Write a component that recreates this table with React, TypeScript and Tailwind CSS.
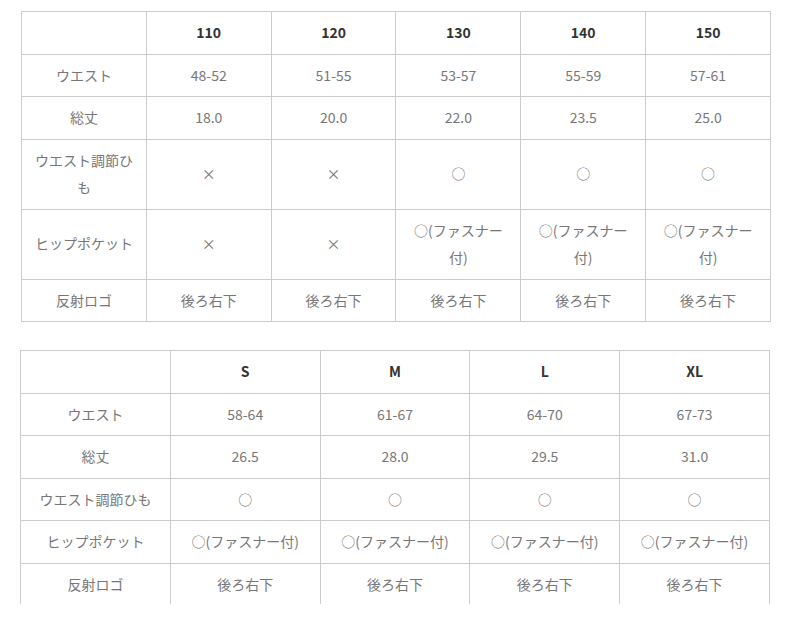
import React from 'react';

type Row = { label: string; values: string[] };

const KIDS_SIZES = ['110', '120', '130', '140', '150'];
const KIDS_ROWS: Row[] = [
  { label: 'ウエスト', values: ['48-52', '51-55', '53-57', '55-59', '57-61'] },
  { label: '総丈', values: ['18.0', '20.0', '22.0', '23.5', '25.0'] },
  { label: 'ウエスト調節ひも', values: ['×', '×', '○', '○', '○'] },
  { label: 'ヒップポケット', values: ['×', '×', '○(ファスナー付)', '○(ファスナー付)', '○(ファスナー付)'] },
  { label: '反射ロゴ', values: ['後ろ右下', '後ろ右下', '後ろ右下', '後ろ右下', '後ろ右下'] },
];

const ADULT_SIZES = ['S', 'M', 'L', 'XL'];
const ADULT_ROWS: Row[] = [
  { label: 'ウエスト', values: ['58-64', '61-67', '64-70', '67-73'] },
  { label: '総丈', values: ['26.5', '28.0', '29.5', '31.0'] },
  { label: 'ウエスト調節ひも', values: ['○', '○', '○', '○'] },
  { label: 'ヒップポケット', values: ['○(ファスナー付)', '○(ファスナー付)', '○(ファスナー付)', '○(ファスナー付)'] },
  { label: '反射ロゴ', values: ['後ろ右下', '後ろ右下', '後ろ右下', '後ろ右下'] },
];

const cell = 'border border-[#cccccc] px-[10px] py-[7px] text-center align-middle leading-[27.5px]';

const SizeTable: React.FC<{ sizes: string[]; rows: Row[] }> = ({ sizes, rows }) => (
  <table className="w-[750px] table-fixed border-collapse text-[14px]">
    <thead>
      <tr>
        <th className={`${cell} font-normal`}></th>
        {sizes.map((s) => (
          <th key={s} className={`${cell} font-bold text-[#333333]`}>
            {s}
          </th>
        ))}
      </tr>
    </thead>
    <tbody>
      {rows.map((row) => (
        <tr key={row.label}>
          <td className={`${cell} text-[#777777]`}>{row.label}</td>
          {row.values.map((v, i) => (
            <td key={i} className={`${cell} text-[#777777]`}>
              {v}
            </td>
          ))}
        </tr>
      ))}
    </tbody>
  </table>
);

export default function App() {
  return (
    <div
      className="w-[794px] h-[624px] bg-white overflow-hidden"
      style={{ fontFamily: '"Noto Sans CJK JP", "Noto Sans", sans-serif' }}
    >
      <div className="pt-[11px] pl-[21px]">
        <SizeTable sizes={KIDS_SIZES} rows={KIDS_ROWS} />
      </div>
      {/* second table is cut off at the bottom edge of the capture */}
      <div className="mt-[28px] ml-[20px] h-[254px] w-[752px] overflow-hidden">
        <SizeTable sizes={ADULT_SIZES} rows={ADULT_ROWS} />
      </div>
    </div>
  );
}
